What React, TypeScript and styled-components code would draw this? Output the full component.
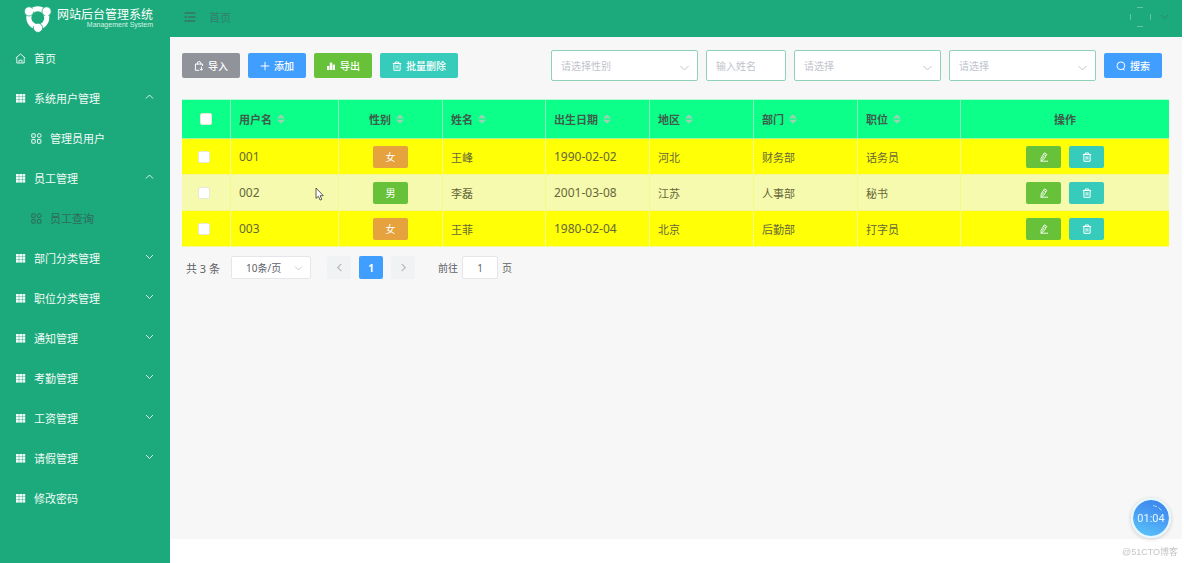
import React from 'react';
import styled, { createGlobalStyle } from 'styled-components';

const GlobalStyle = createGlobalStyle`
  * { box-sizing: border-box; }
  body {
    margin: 0;
    background: #fff;
    font-family: "Noto Sans", "Noto Sans CJK SC", sans-serif;
    font-size: 11px;
    color: #606266;
  }
  button, input, select { font-family: inherit; margin: 0; }
`;

const Shell = styled.div`
  display: flex;
  min-height: 100vh;
`;

const Sidebar = styled.aside`
  flex: 0 0 170px;
  background: #1caa7c;
  color: #fff;
`;

const Brand = styled.div`
  display: flex;
  align-items: center;
  height: 38px;
  padding-left: 24px;
  gap: 5px;
`;

const BrandText = styled.div`
  display: flex;
  flex-direction: column;
  align-items: flex-end;
  padding-bottom: 2px;
`;

const BrandName = styled.span`
  font-family: "Noto Sans CJK SC", sans-serif;
  font-size: 12px;
  line-height: 14px;
  font-weight: 400;
  white-space: nowrap;
`;

const BrandSub = styled.span`
  font-family: "Liberation Sans", sans-serif;
  font-size: 7px;
  line-height: 8px;
  color: #d5f2e6;
  white-space: nowrap;
`;

const Menu = styled.nav`
  display: flex;
  flex-direction: column;
`;

const MenuItem = styled.a<{ $sub?: boolean; $active?: boolean }>`
  display: flex;
  align-items: center;
  height: 40px;
  padding: 0 16px 0 ${(p) => (p.$sub ? 31 : 15)}px;
  gap: 8px;
  font-size: 11px;
  color: ${(p) => (p.$active ? '#31695a' : '#f2fbf7')};
  text-decoration: none;
`;

const MenuLabel = styled.span`
  flex: 1;
`;

const MenuArrow = styled.span`
  display: flex;
  padding-bottom: 4px;
`;

const Main = styled.div`
  flex: 1;
  min-width: 0;
  margin-right: 2px;
`;

const TopBar = styled.header`
  display: flex;
  align-items: center;
  height: 37px;
  padding: 0 13px 4px 14px;
  background: #1caa7c;
  color: #31806a;
`;

const Crumb = styled.a`
  flex: 1;
  margin-left: 13px;
  font-size: 11px;
  color: #31806a;
  text-decoration: none;
`;

const IconButton = styled.button`
  display: flex;
  align-items: center;
  gap: 9px;
  padding: 0;
  border: 0;
  background: none;
  color: inherit;
`;

const Content = styled.main`
  min-height: calc(100vh - 61px);
  padding: 13px 13px 24px 12px;
  background: #f7f7f7;
`;

const Toolbar = styled.div`
  display: flex;
  align-items: center;
  justify-content: space-between;
  padding-right: 7px;
  margin-bottom: 18px;
`;

const Group = styled.div`
  display: flex;
  align-items: center;
  gap: 8px;
`;

const ActionButton = styled.button<{ $bg: string; $wide?: boolean }>`
  display: flex;
  align-items: center;
  justify-content: center;
  gap: 4px;
  width: ${(p) => (p.$wide ? 78 : 58)}px;
  height: 25px;
  padding: 0;
  border: 0;
  border-radius: 2px;
  background: ${(p) => p.$bg};
  color: #fff;
  font-size: 10px;
  font-weight: 500;
  white-space: nowrap;
`;

const SelectWrap = styled.span`
  position: relative;
  display: inline-flex;
  color: #c0c4cc;

  svg {
    position: absolute;
    right: 8px;
    top: 50%;
    transform: translateY(-50%);
    pointer-events: none;
  }
`;

const FilterSelect = styled.select`
  appearance: none;
  width: 147px;
  height: 31px;
  padding: 0 24px 0 9px;
  border: 1px solid #8fd2b6;
  border-radius: 2px;
  background: #fff;
  color: #c0c4cc;
  font-size: 10px;
`;

const FilterInput = styled.input`
  width: 80px;
  height: 31px;
  padding: 0 9px;
  border: 1px solid #8fd2b6;
  border-radius: 2px;
  background: #fff;
  font-size: 10px;

  &::placeholder { color: #c0c4cc; }
`;

const Table = styled.table`
  width: 100%;
  table-layout: fixed;
  border-collapse: separate;
  border-spacing: 0;
`;

const HeadCell = styled.th<{ $center?: boolean; $first?: boolean }>`
  height: 40px;
  padding: 0 8px;
  border-left: ${(p) => (p.$first ? '0' : '1px solid #8df3bf')};
  border-top: 1px solid #b9f7d6;
  border-bottom: 1px solid #a6f59a;
  background: #0cff88;
  color: #3d5c4c;
  font-size: 11px;
  font-weight: 700;
  text-align: ${(p) => (p.$center ? 'center' : 'left')};
`;

const HeadLabel = styled.span`
  display: inline-flex;
  align-items: center;
  gap: 5px;
  padding-right: 8px;
`;

const Row = styled.tr<{ $pale?: boolean }>`
  background: ${(p) => (p.$pale ? '#f6faae' : '#ffff05')};
`;

const Cell = styled.td<{ $center?: boolean; $numeric?: boolean; $first?: boolean }>`
  height: 36px;
  padding: ${(p) => (p.$first ? '0 10px 0 6px' : '0 8px')};
  border-left: ${(p) => (p.$first ? '0' : '1px solid #f4f98c')};
  border-bottom: 1px solid #f5f89a;
  color: #65673a;
  font-size: ${(p) => (p.$numeric ? 12 : 11)}px;
  text-align: ${(p) => (p.$center ? 'center' : 'left')};
`;

const Check = styled.input`
  appearance: none;
  display: block;
  margin: 0 auto;
  width: 12px;
  height: 12px;
  border: 1px solid #e6ead4;
  border-radius: 2px;
  background: #fff;
`;

const Tag = styled.span<{ $male?: boolean }>`
  display: inline-flex;
  align-items: center;
  justify-content: center;
  vertical-align: middle;
  width: 35px;
  height: 22px;
  border-radius: 2px;
  background: ${(p) => (p.$male ? '#67c23a' : '#e6a23c')};
  color: #fff;
  font-size: 10px;
`;

const RowActions = styled.div`
  display: flex;
  justify-content: center;
  gap: 8px;
`;

const MiniButton = styled.button<{ $bg: string }>`
  display: flex;
  align-items: center;
  justify-content: center;
  width: 35px;
  height: 22px;
  padding: 0;
  border: 0;
  border-radius: 2px;
  background: ${(p) => p.$bg};
  color: #fff;
`;

const Pagination = styled.div`
  display: flex;
  align-items: center;
  margin-top: 9px;
  padding-left: 4px;
  font-size: 10px;
`;

const Total = styled.span`
  width: 45px;
  font-size: 11px;
`;

const PageSize = styled.select`
  appearance: none;
  width: 80px;
  height: 23px;
  padding: 0 24px 0 14px;
  border: 1px solid #e4e6ea;
  border-radius: 2px;
  background: #fff;
  color: #606266;
  font-size: 10px;
`;

const Pages = styled.div`
  display: flex;
  gap: 8px;
  margin: 0 23px 0 16px;
`;

const PageButton = styled.button<{ $current?: boolean }>`
  display: flex;
  align-items: center;
  justify-content: center;
  width: 24px;
  height: 23px;
  padding: 0;
  border: 0;
  border-radius: 2px;
  background: ${(p) => (p.$current ? '#409eff' : '#f1f2f3')};
  color: ${(p) => (p.$current ? '#fff' : '#b4b7be')};
  font-size: 10px;
  font-weight: 700;
`;

const Jump = styled.label`
  display: flex;
  align-items: center;
  gap: 4px;
`;

const JumpInput = styled.input`
  width: 36px;
  height: 23px;
  padding: 0;
  border: 1px solid #e4e6ea;
  border-radius: 2px;
  background: #fff;
  color: #606266;
  font-size: 10px;
  text-align: center;
`;

const Timer = styled.div`
  position: fixed;
  right: 13px;
  bottom: 25px;
  display: flex;
  align-items: center;
  justify-content: center;
  width: 40px;
  height: 40px;
  border: 2px solid #e6f8ff;
  border-radius: 50%;
  background: linear-gradient(200deg, #3c86ee 10%, #4aa0f4 50%, #5cc8f8 100%);
  background-clip: padding-box;
  box-shadow: 0 1px 4px rgba(0, 0, 0, 0.18);
  color: #e8f6ff;
  font-family: Roboto, sans-serif;
  font-size: 11px;
`;

const TimerSpark = styled.svg`
  position: absolute;
  left: 0;
  top: 0;
`;

const Watermark = styled.div`
  position: fixed;
  right: 6px;
  bottom: 4px;
  font-family: "Liberation Sans", "Noto Sans CJK SC", sans-serif;
  font-size: 9px;
  line-height: 14px;
  color: #c4c4c4;
`;

const Pointer = styled.svg`
  position: absolute;
  left: 315px;
  top: 187px;
`;

const Logo = () => (
  <svg width="28" height="28" viewBox="0 0 28 28" fill="none" aria-hidden="true">
    <circle cx="13.8" cy="12.8" r="9" stroke="#fff" strokeWidth="5" />
    <g fill="#fff" stroke="#1caa7c" strokeWidth="0.8">
      <circle cx="5" cy="6.4" r="4.6" />
      <circle cx="22.6" cy="6.4" r="4.6" />
      <circle cx="14" cy="22.8" r="4.6" />
    </g>
    <g stroke="#fff" strokeWidth="3">
      <path d="M6.4 6.4L11 4.2" />
      <path d="M22.4 8L23 13" />
      <path d="M12.6 21.4L8.4 18.6" />
    </g>
  </svg>
);

const HomeIcon = () => (
  <svg width="11" height="11" viewBox="0 0 11 11" fill="none" stroke="currentColor" aria-hidden="true">
    <path d="M0.8 5L5.5 1l4.7 4M1.8 4.2V10h7.4V4.2M4 9.8V7.2h3v2.6" strokeWidth="0.9" />
  </svg>
);

const GridIcon = () => (
  <svg width="11" height="11" viewBox="0 0 11 11" fill="currentColor" aria-hidden="true">
    {[1, 4, 7].map((y) => (
      <g key={y}>
        <rect x="1" y={y} width="2.8" height="2.6" />
        <rect x="4.2" y={y} width="2.8" height="2.6" />
        <rect x="7.4" y={y} width="2.8" height="2.6" />
      </g>
    ))}
  </svg>
);

const ModuleIcon = () => (
  <svg width="11" height="11" viewBox="0 0 11 11" fill="none" stroke="currentColor" aria-hidden="true">
    <rect x="0.8" y="0.8" width="3.4" height="3.6" rx="0.4" />
    <circle cx="8.2" cy="2.6" r="1.9" />
    <rect x="0.8" y="6.4" width="3.4" height="3.8" rx="0.4" />
    <rect x="6.5" y="6.4" width="3.4" height="3.8" rx="0.4" />
  </svg>
);

const Chevron = ({ dir = 'down', size = 9 }: { dir?: 'up' | 'down' | 'left' | 'right'; size?: number }) => {
  const paths = {
    up: 'M1 6.5L4.5 3 8 6.5',
    down: 'M1 3L4.5 6.5 8 3',
    left: 'M6 1.5L3 4.5 6 7.5',
    right: 'M3 1.5L6 4.5 3 7.5',
  };
  return (
    <svg width={size} height={size} viewBox="0 0 9 9" fill="none" stroke="currentColor" strokeWidth="0.9" aria-hidden="true">
      <path d={paths[dir]} />
    </svg>
  );
};

const SelectArrow = () => (
  <svg width="11" height="11" viewBox="0 0 11 11" fill="none" stroke="currentColor" aria-hidden="true">
    <path d="M1.5 5.5l4 4 4-4" />
  </svg>
);

const ImportIcon = () => (
  <svg width="10" height="10" viewBox="0 0 10 10" fill="none" stroke="currentColor" aria-hidden="true">
    <path d="M8.6 5V3H1.4v6.3h3.8M3.2 3.8V2.4a1.8 1.8 0 0 1 3.6 0v1.4M7.4 5.6v3.6M5.9 7.8l1.5 1.5 1.5-1.5" />
  </svg>
);

const PlusIcon = () => (
  <svg width="10" height="10" viewBox="0 0 10 10" fill="none" stroke="currentColor" aria-hidden="true">
    <path d="M5 0.8v8.4M0.8 5h8.4" />
  </svg>
);

const BarsIcon = () => (
  <svg width="10" height="10" viewBox="0 0 10 10" fill="currentColor" aria-hidden="true">
    <rect x="1" y="5" width="2.4" height="4" />
    <rect x="3.8" y="1.6" width="2.4" height="7.4" />
    <rect x="6.6" y="3.6" width="2.4" height="5.4" />
  </svg>
);

const TrashIcon = () => (
  <svg width="10" height="10" viewBox="0 0 10 10" fill="none" stroke="currentColor" aria-hidden="true">
    <path d="M0.8 2.5h8.4M3.3 2.3V1h3.4v1.3M1.9 2.6v6.7h6.2V2.6M4.1 4.2v3.4M5.9 4.2v3.4" />
  </svg>
);

const SearchIcon = () => (
  <svg width="10" height="10" viewBox="0 0 10 10" fill="none" stroke="currentColor" aria-hidden="true">
    <circle cx="4.9" cy="4.8" r="3.9" />
    <path d="M6.8 7.8l1.8 1.4" />
  </svg>
);

const EditIcon = () => (
  <svg width="10" height="10" viewBox="0 0 10 10" fill="none" stroke="currentColor" aria-hidden="true">
    <path d="M5.4 0.9l2.4 1.4-3.2 5.2-2.5 1.2 0-2.6zM4.5 2.4l2.4 1.4M4.6 4.4L3.4 6.6M1.4 9.2h7.6" strokeWidth="0.9" />
  </svg>
);

const SortIcon = () => (
  <svg width="8" height="10" viewBox="0 0 8 10" fill="#9fd0b6" aria-hidden="true">
    <path d="M4 0.5L8 4.2H0zM4 9.5L0 5.8h8z" />
  </svg>
);

const FoldIcon = () => (
  <svg width="12" height="10" viewBox="0 0 12 10" fill="none" stroke="currentColor" strokeWidth="2" aria-hidden="true">
    <path d="M0.5 1h11M0.5 5h2.5M4 5h7.5M0.5 9h11" />
  </svg>
);

const AvatarOutline = () => (
  <svg width="22" height="20" viewBox="0 0 22 20" fill="none" stroke="#62c6a3" aria-hidden="true">
    <path d="M8 0.5h6M8 19.5h6M1.5 7v6M21.5 7v6" />
  </svg>
);

type Item = { label: string; kind?: 'home' | 'grid' | 'module'; arrow?: 'up' | 'down'; active?: boolean };

const items: Item[] = [
  { label: '首页', kind: 'home' },
  { label: '系统用户管理', arrow: 'up' },
  { label: '管理员用户', kind: 'module' },
  { label: '员工管理', arrow: 'up' },
  { label: '员工查询', kind: 'module', active: true },
  { label: '部门分类管理', arrow: 'down' },
  { label: '职位分类管理', arrow: 'down' },
  { label: '通知管理', arrow: 'down' },
  { label: '考勤管理', arrow: 'down' },
  { label: '工资管理', arrow: 'down' },
  { label: '请假管理', arrow: 'down' },
  { label: '修改密码' },
];

const columns = [
  { label: '用户名', width: 108 },
  { label: '性别', width: 104, center: true },
  { label: '姓名', width: 103 },
  { label: '出生日期', width: 104 },
  { label: '地区', width: 104 },
  { label: '部门', width: 104 },
  { label: '职位', width: 103 },
];

const people = [
  { id: '001', sex: '女', name: '王峰', birth: '1990-02-02', area: '河北', dept: '财务部', job: '话务员' },
  { id: '002', sex: '男', name: '李磊', birth: '2001-03-08', area: '江苏', dept: '人事部', job: '秘书' },
  { id: '003', sex: '女', name: '王菲', birth: '1980-02-04', area: '北京', dept: '后勤部', job: '打字员' },
];

const Filter = ({ text, label }: { text: string; label: string }) => (
  <SelectWrap>
    <FilterSelect aria-label={label}>
      <option>{text}</option>
    </FilterSelect>
    <SelectArrow />
  </SelectWrap>
);

export default function App() {
  return (
    <>
      <GlobalStyle />
      <Shell>
        <Sidebar>
          <Brand>
            <Logo />
            <BrandText>
              <BrandName>网站后台管理系统</BrandName>
              <BrandSub>Management System</BrandSub>
            </BrandText>
          </Brand>
          <Menu>
            {items.map((item) => (
              <MenuItem key={item.label} href="#" $sub={item.kind === 'module'} $active={item.active}>
                {item.kind === 'home' ? <HomeIcon /> : item.kind === 'module' ? <ModuleIcon /> : <GridIcon />}
                <MenuLabel>{item.label}</MenuLabel>
                {item.arrow && (
                  <MenuArrow>
                    <Chevron dir={item.arrow} />
                  </MenuArrow>
                )}
              </MenuItem>
            ))}
          </Menu>
        </Sidebar>
        <Main>
          <TopBar>
            <IconButton aria-label="折叠菜单">
              <FoldIcon />
            </IconButton>
            <Crumb href="#">首页</Crumb>
            <IconButton aria-label="用户菜单">
              <AvatarOutline />
              <Chevron />
            </IconButton>
          </TopBar>
          <Content>
            <Toolbar>
              <Group>
                <ActionButton $bg="#909399"><ImportIcon />导入</ActionButton>
                <ActionButton $bg="#409eff"><PlusIcon />添加</ActionButton>
                <ActionButton $bg="#67c23a"><BarsIcon />导出</ActionButton>
                <ActionButton $bg="#36cbbb" $wide><TrashIcon />批量删除</ActionButton>
              </Group>
              <Group>
                <Filter text="请选择性别" label="性别" />
                <FilterInput placeholder="输入姓名" aria-label="姓名" />
                <Filter text="请选择" label="部门" />
                <Filter text="请选择" label="职位" />
                <ActionButton $bg="#409eff"><SearchIcon />搜索</ActionButton>
              </Group>
            </Toolbar>
            <Table>
              <colgroup>
                <col width={48} />
                {columns.map((c) => <col key={c.label} width={c.width} />)}
                <col />
              </colgroup>
              <thead>
                <tr>
                  <HeadCell $center $first><Check type="checkbox" aria-label="全选" /></HeadCell>
                  {columns.map((c) => (
                    <HeadCell key={c.label} $center={c.center}>
                      <HeadLabel>{c.label}<SortIcon /></HeadLabel>
                    </HeadCell>
                  ))}
                  <HeadCell $center>操作</HeadCell>
                </tr>
              </thead>
              <tbody>
                {people.map((p, i) => (
                  <Row key={p.id} $pale={i === 1}>
                    <Cell $center $first><Check type="checkbox" aria-label={p.name} /></Cell>
                    <Cell $numeric>{p.id}</Cell>
                    <Cell $center><Tag $male={p.sex === '男'}>{p.sex}</Tag></Cell>
                    <Cell>{p.name}</Cell>
                    <Cell $numeric>{p.birth}</Cell>
                    <Cell>{p.area}</Cell>
                    <Cell>{p.dept}</Cell>
                    <Cell>{p.job}</Cell>
                    <Cell>
                      <RowActions>
                        <MiniButton $bg="#67c23a" aria-label="编辑"><EditIcon /></MiniButton>
                        <MiniButton $bg="#36cbbb" aria-label="删除"><TrashIcon /></MiniButton>
                      </RowActions>
                    </Cell>
                  </Row>
                ))}
              </tbody>
            </Table>
            <Pagination>
              <Total>共 3 条</Total>
              <SelectWrap>
                <PageSize aria-label="每页条数">
                  <option>10条/页</option>
                </PageSize>
                <Chevron />
              </SelectWrap>
              <Pages>
                <PageButton aria-label="上一页"><Chevron dir="left" size={11} /></PageButton>
                <PageButton $current>1</PageButton>
                <PageButton aria-label="下一页"><Chevron dir="right" size={11} /></PageButton>
              </Pages>
              <Jump>前往<JumpInput defaultValue="1" />页</Jump>
            </Pagination>
          </Content>
        </Main>
      </Shell>
      <Pointer width="9" height="14" viewBox="0 0 9 14" aria-hidden="true">
        <path d="M1 1v10.4l2.4-2.1 1.7 3.8 1.7-0.8-1.7-3.6h3.2z" fill="#fff" stroke="#4a4a40" strokeWidth="0.9" />
      </Pointer>
      <Timer>
        <TimerSpark width="36" height="36" viewBox="0 0 36 36" fill="none" stroke="#a5d6fb" aria-hidden="true">
          <path d="M20 5.5l4 1.2M25.5 7.5l3 3" />
        </TimerSpark>
        01:04
      </Timer>
      <Watermark>@51CTO博客</Watermark>
    </>
  );
}
